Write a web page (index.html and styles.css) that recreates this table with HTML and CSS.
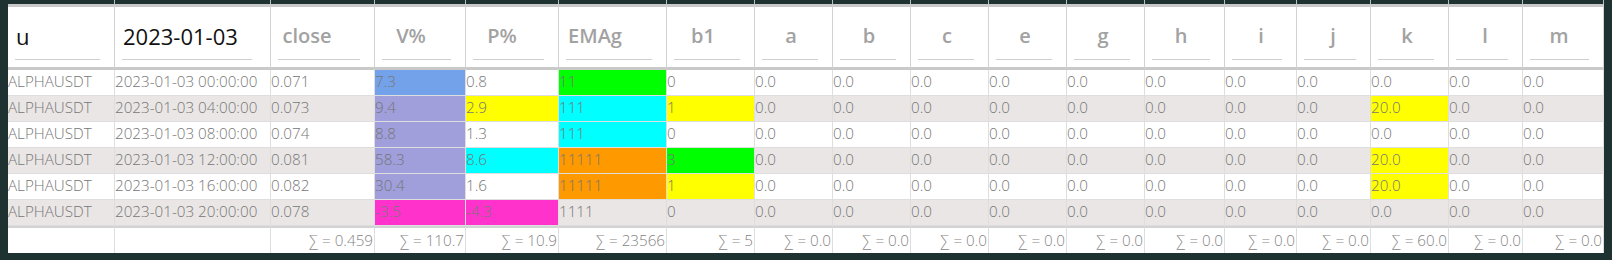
FILE: index.html
```html
<!DOCTYPE html>
<html lang="en">
<head>
<meta charset="utf-8">
<title>Grid</title>
<link rel="stylesheet" href="styles.css">
</head>
<body>
<div class="frame">
<table class="grid">
<colgroup>
<col class="w107"><col class="w156"><col class="w104"><col class="w91"><col class="w93"><col class="w108"><col class="w88">
<col class="w78"><col class="w78"><col class="w78"><col class="w78"><col class="w78"><col class="w80"><col class="w72"><col class="w74"><col class="w78"><col class="w74"><col class="w81">
</colgroup>
<thead>
<tr class="band"><th></th><th></th><th></th><th></th><th></th><th></th><th></th><th></th><th></th><th></th><th></th><th></th><th></th><th></th><th></th><th></th><th></th><th></th></tr>
<tr class="head">
<th><div class="hinput val">u</div></th>
<th class="wide"><div class="hinput val">2023-01-03</div></th>
<th><div class="hinput"><span class="ph">close</span></div></th>
<th><div class="hinput"><span class="ph">V%</span></div></th>
<th><div class="hinput"><span class="ph">P%</span></div></th>
<th><div class="hinput"><span class="ph">EMAg</span></div></th>
<th><div class="hinput"><span class="ph">b1</span></div></th>
<th><div class="hinput"><span class="ph">a</span></div></th>
<th><div class="hinput"><span class="ph">b</span></div></th>
<th><div class="hinput"><span class="ph">c</span></div></th>
<th><div class="hinput"><span class="ph">e</span></div></th>
<th><div class="hinput"><span class="ph">g</span></div></th>
<th><div class="hinput"><span class="ph">h</span></div></th>
<th><div class="hinput"><span class="ph">i</span></div></th>
<th><div class="hinput"><span class="ph">j</span></div></th>
<th><div class="hinput"><span class="ph">k</span></div></th>
<th><div class="hinput"><span class="ph">l</span></div></th>
<th><div class="hinput"><span class="ph">m</span></div></th>
</tr>
</thead>
<tbody>
<tr>
<td>ALPHAUSDT</td><td>2023-01-03 00:00:00</td><td>0.071</td><td class="blue">7.3</td><td>0.8</td><td class="green">11</td><td>0</td>
<td>0.0</td><td>0.0</td><td>0.0</td><td>0.0</td><td>0.0</td><td>0.0</td><td>0.0</td><td>0.0</td><td>0.0</td><td>0.0</td><td>0.0</td>
</tr>
<tr class="alt">
<td>ALPHAUSDT</td><td>2023-01-03 04:00:00</td><td>0.073</td><td class="purple">9.4</td><td class="yellow">2.9</td><td class="cyan">111</td><td class="yellow">1</td>
<td>0.0</td><td>0.0</td><td>0.0</td><td>0.0</td><td>0.0</td><td>0.0</td><td>0.0</td><td>0.0</td><td class="yellow">20.0</td><td>0.0</td><td>0.0</td>
</tr>
<tr>
<td>ALPHAUSDT</td><td>2023-01-03 08:00:00</td><td>0.074</td><td class="purple">8.8</td><td>1.3</td><td class="cyan">111</td><td>0</td>
<td>0.0</td><td>0.0</td><td>0.0</td><td>0.0</td><td>0.0</td><td>0.0</td><td>0.0</td><td>0.0</td><td>0.0</td><td>0.0</td><td>0.0</td>
</tr>
<tr class="alt">
<td>ALPHAUSDT</td><td>2023-01-03 12:00:00</td><td>0.081</td><td class="purple">58.3</td><td class="cyan">8.6</td><td class="orange">11111</td><td class="green">3</td>
<td>0.0</td><td>0.0</td><td>0.0</td><td>0.0</td><td>0.0</td><td>0.0</td><td>0.0</td><td>0.0</td><td class="yellow">20.0</td><td>0.0</td><td>0.0</td>
</tr>
<tr>
<td>ALPHAUSDT</td><td>2023-01-03 16:00:00</td><td>0.082</td><td class="purple">30.4</td><td>1.6</td><td class="orange">11111</td><td class="yellow">1</td>
<td>0.0</td><td>0.0</td><td>0.0</td><td>0.0</td><td>0.0</td><td>0.0</td><td>0.0</td><td>0.0</td><td class="yellow">20.0</td><td>0.0</td><td>0.0</td>
</tr>
<tr class="alt">
<td>ALPHAUSDT</td><td>2023-01-03 20:00:00</td><td>0.078</td><td class="magenta">-3.5</td><td class="magenta">-4.3</td><td>1111</td><td>0</td>
<td>0.0</td><td>0.0</td><td>0.0</td><td>0.0</td><td>0.0</td><td>0.0</td><td>0.0</td><td>0.0</td><td>0.0</td><td>0.0</td><td>0.0</td>
</tr>
</tbody>
<tfoot>
<tr>
<td></td><td></td><td>∑ = 0.459</td><td>∑ = 110.7</td><td>∑ = 10.9</td><td>∑ = 23566</td><td>∑ = 5</td>
<td>∑ = 0.0</td><td>∑ = 0.0</td><td>∑ = 0.0</td><td>∑ = 0.0</td><td>∑ = 0.0</td><td>∑ = 0.0</td><td>∑ = 0.0</td><td>∑ = 0.0</td><td>∑ = 60.0</td><td>∑ = 0.0</td><td>∑ = 0.0</td>
</tr>
</tfoot>
</table>
</div>
</body>
</html>
```
FILE: styles.css
```css
* { box-sizing: border-box; }
html, body { margin: 0; padding: 0; }
body {
  background: #1e3232;
  font-family: "Open Sans", "Noto Sans", sans-serif;
  width: 1612px;
  height: 260px;
  overflow: hidden;
}
.frame {
  padding: 0 8px 7px 8px;
}
.grid {
  table-layout: fixed;
  border-collapse: separate;
  border-spacing: 0;
  width: 1596px;
}
.w107 { width: 107px; }
.w156 { width: 156px; }
.w104 { width: 104px; }
.w91 { width: 91px; }
.w93 { width: 93px; }
.w108 { width: 108px; }
.w88 { width: 88px; }
.w78 { width: 78px; }
.w80 { width: 80px; }
.w72 { width: 72px; }
.w74 { width: 74px; }
.w81 { width: 81px; }

.band th {
  height: 4px;
  padding: 0;
  font-size: 0;
  line-height: 0;
  border-right: 1px solid #b9bfbf;
}
.head th {
  background: #fff;
  border-top: 3px solid #c9c9c9;
  border-bottom: 3px solid #c9c9c9;
  border-right: 1px solid #d2d2d2;
  padding: 0 14px 7px 7px;
  vertical-align: bottom;
  text-align: left;
}
.head th.wide { padding-right: 18px; }
.hinput {
  height: 53px;
  padding: 14px 0 8px 0;
  line-height: 30px;
  border-bottom: 1px solid #cfcfcf;
  white-space: nowrap;
  overflow: visible;
}
.hinput.val {
  color: #111;
  font-size: 22px;
  font-weight: 500;
  padding-left: 1px;
}
.ph {
  display: inline-block;
  width: 58px;
  text-align: center;
  color: #a2a2a2;
  font-size: 20px;
  font-weight: 600;
}

tbody td {
  background: #fff;
  color: #767676;
  font-size: 15.2px;
  font-weight: 300;
  line-height: 20px;
  padding: 1px 0 4px 0;
  border-right: 1px solid #dedede;
  border-bottom: 1px solid #dedede;
  white-space: nowrap;
  overflow: hidden;
}
tbody tr.alt td { background: #e9e6e5; }
tbody tr td.blue { background: #74a2ea; }
tbody tr td.purple { background: #a09edb; }
tbody tr td.green { background: #00ff00; }
tbody tr td.cyan { background: #00ffff; }
tbody tr td.yellow { background: #ffff00; }
tbody tr td.orange { background: #ff9900; }
tbody tr td.magenta { background: #ff33cc; }

tfoot td {
  background: #fff;
  color: #858585;
  font-size: 15.2px;
  font-weight: 300;
  line-height: 25px;
  height: 27px;
  padding: 0 1px 0 0;
  text-align: right;
  border-top: 2px solid #d3d3d3;
  border-right: 1px solid #dedede;
  white-space: nowrap;
  overflow: hidden;
}
```
